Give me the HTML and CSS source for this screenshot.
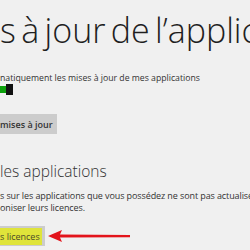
FILE: index.html
```html
<!DOCTYPE html>
<html lang="fr">
<head>
<meta charset="utf-8">
<link rel="stylesheet" href="styles.css">
</head>
<body>
<div class="page">
  <h1 class="title">s à jour de l’applications</h1>
  <p class="option">natiquement les mises à jour de mes applications</p>
  <div class="toggle"><span class="track"></span><span class="thumb"></span></div>
  <button class="btn">mises à jour</button>
  <h2 class="subtitle">les applications</h2>
  <p class="desc">s sur les applications que vous possédez ne sont pas actualisées<br>oniser leurs licences.</p>
  <div class="row">
    <button class="btn btn-sync"><span class="hl">s licences</span></button>
    <svg class="arrow" width="84" height="14" viewBox="0 0 84 14">
      <path d="M1 7 L15 1 L13 5.6 L83 6 L83 8.2 L13 8.6 L15 13 Z" fill="#e3141b"/>
    </svg>
  </div>
</div>
</body>
</html>
```
FILE: styles.css
```css
html, body {
  margin: 0;
  padding: 0;
  background: #f0f0f0;
  overflow: hidden;
  width: 250px;
  height: 250px;
}
.page {
  font-family: "Open Sans", "Noto Sans", sans-serif;
  color: #333;
  display: flex;
  flex-direction: column;
  align-items: flex-start;
  white-space: nowrap;
}
.title {
  margin: 11px 0 0 0;
  font-size: 34px;
  font-weight: 300;
  word-spacing: -3.5px;
  color: #1f1f1f;
  line-height: 39px;
}
.option {
  margin: 22px 0 0 0;
  font-size: 8.7px;
  line-height: 12px;
  color: #333;
}
.toggle {
  display: flex;
  align-items: center;
  height: 11px;
}
.track {
  width: 6px;
  height: 7px;
  background: #0ca10c;
}
.thumb {
  width: 7px;
  height: 11px;
  background: #111;
}
.btn {
  font-family: inherit;
  border: none;
  background: #cccccc;
  color: #333;
  font-size: 9px;
  font-weight: 600;
  padding: 0 4px 0 0;
  height: 20px;
  margin: 19px 0 0 0;
}
.subtitle {
  margin: 27px 0 0 0;
  font-size: 15.5px;
  font-weight: 300;
  color: #333;
  line-height: 20px;
}
.desc {
  margin: 9px 0 0 0;
  font-size: 9px;
  letter-spacing: -0.1px;
  line-height: 12px;
  color: #333;
}
.row {
  display: flex;
  align-items: center;
  margin-top: 12px;
  gap: 2px;
}
.btn-sync {
  margin: 0;
  padding: 0 3px 0 0;
  height: 20px;
  font-weight: 400;
}
.hl {
  display: inline-block;
  background: #dfe43a;
  padding: 2px 2px 2px 0;
  color: #4a4a2a;
}
```
